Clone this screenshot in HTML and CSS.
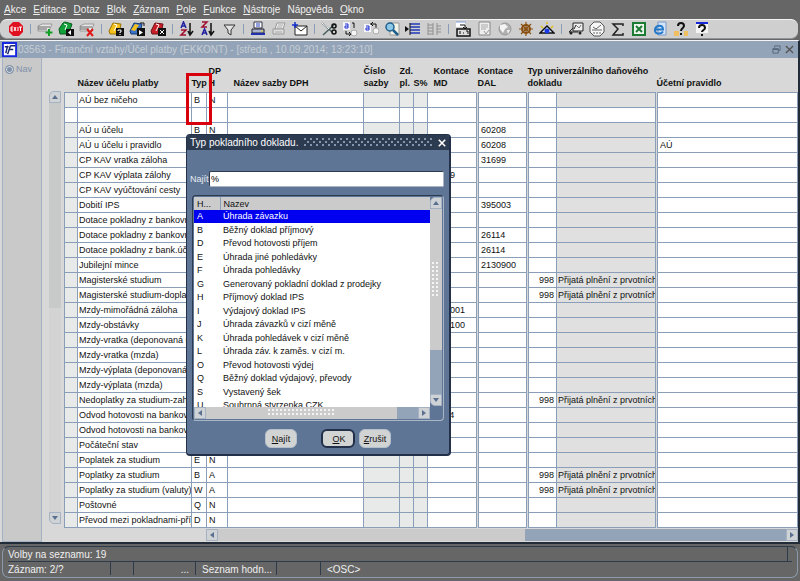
FILE: index.html
```html
<!DOCTYPE html>
<html lang="cs">
<head>
<meta charset="UTF-8" />
<meta name="viewport" content="width=device-width, initial-scale=1" />
<title>Finanční vztahy/Účel platby</title>
<link rel="stylesheet" href="styles.css">
</head>
<body>

<nav class="menubar">
  <a href="#"><u>A</u>kce</a>
  <a href="#"><u>E</u>ditace</a>
  <a href="#"><u>D</u>otaz</a>
  <a href="#"><u>B</u>lok</a>
  <a href="#"><u>Z</u>áznam</a>
  <a href="#"><u>P</u>ole</a>
  <a href="#"><u>F</u>unkce</a>
  <a href="#"><u>N</u>ástroje</a>
  <a href="#">Náp<u>o</u>věda</a>
  <a href="#"><u>O</u>kno</a>
</nav>

<div class="toolbar">
  <button type="button" aria-label="Exit"><svg viewBox="0 0 16 16"><path d="M5 1h6l4 4v6l-4 4H5l-4-4V5z" fill="#e01020"/><path d="M3 6h2M3 8h2M3 10h2M3 6v4M6 6l2 4M8 6l-2 4M10 6v4M11 6h3M12.5 6v4" stroke="#fff" fill="none"/></svg></button>
  <i class="sep"></i>
  <button type="button" aria-label="Vložit záznam"><svg viewBox="0 0 16 16"><path d="M1 5l4-2h10l-3 7H1z" fill="#e8e8e8" stroke="#999"/><path d="M1 6h12M1 8h9" stroke="#666"/><path d="M12 8v7M8.500 11.500h7" stroke="#12a024" stroke-width="2"/></svg></button>
  <button type="button" aria-label="Uložit"><svg viewBox="0 0 16 16"><path d="M1 8l4-6 2-1 7 2-1 3-3 7H2z" fill="#14a038" stroke="#075c1c"/><path d="M6 3l3 1-2 5" stroke="#fff" fill="none"/><rect x="8" y="8" width="8" height="7" fill="#111"/><path d="M13 9v5l-3-2.500z" fill="#fff"/></svg></button>
  <button type="button" aria-label="Smazat záznam"><svg viewBox="0 0 16 16"><path d="M1 5l4-2h10l-3 7H1z" fill="#e8e8e8" stroke="#999"/><path d="M1 6h12M1 8h9" stroke="#666"/><path d="M8 8l6 7M14 8l-6 7" stroke="#e01818" stroke-width="2"/></svg></button>
  <i class="sep"></i>
  <button type="button" aria-label="Zadat dotaz"><svg viewBox="0 0 16 16"><path d="M1 10l4-8 8 1-2 10H2z" fill="#f4c01c" stroke="#9a7400"/><path d="M6 3l3 1-3 6" stroke="#fff" fill="none"/><rect x="8" y="7" width="8" height="8" fill="#111"/><path d="M10 10V9h3v2h-1v1M12 13v1" stroke="#fff" fill="none"/></svg></button>
  <button type="button" aria-label="Provést dotaz"><svg viewBox="0 0 16 16"><path d="M1 10l4-8 8 1-2 10H2z" fill="#3a74c8" stroke="#173a78"/><path d="M2 9l4-6 4 1-4 6z" fill="#f4c01c"/><path d="M11 2h4v3" stroke="#111" fill="none"/><rect x="8" y="7" width="8" height="8" fill="#111"/><path d="M10 9v5l4-2.500z" fill="#fff"/></svg></button>
  <button type="button" aria-label="Zrušit dotaz"><svg viewBox="0 0 16 16"><path d="M1 10l4-8 8 1-2 10H2z" fill="#c82028" stroke="#701014"/><path d="M6 3l3 1-3 6" stroke="#fff" fill="none"/><rect x="8" y="7" width="8" height="8" fill="#111"/><path d="M10 9l4 4M14 9l-4 4" stroke="#fff" fill="none"/></svg></button>
  <i class="sep"></i>
  <button type="button" aria-label="Řadit vzestupně"><svg viewBox="0 0 16 16"><path d="M2 7l2.500-6L7 7M3 5h3" stroke="#2020a0" stroke-width="1.500" fill="none"/><path d="M2 9h5l-5 5h5" stroke="#a01030" stroke-width="1.500" fill="none"/><path d="M11 2v11M9 10l2 4 3-4" stroke="#111" stroke-width="1.500" fill="none"/></svg></button>
  <button type="button" aria-label="Řadit sestupně"><svg viewBox="0 0 16 16"><path d="M2 1h5L2 6h5" stroke="#a01030" stroke-width="1.500" fill="none"/><path d="M2 14l2.500-6L7 14M3 12h3" stroke="#2020a0" stroke-width="1.500" fill="none"/><path d="M11 2v11M9 10l2 4 3-4" stroke="#111" stroke-width="1.500" fill="none"/></svg></button>
  <button type="button" aria-label="Filtr"><svg viewBox="0 0 16 16"><path d="M3 4h11l-4 5v5l-3-2V9z" fill="#e4e4e4" stroke="#333"/></svg></button>
  <i class="sep"></i>
  <button type="button" aria-label="Tisk"><svg viewBox="0 0 16 16"><path d="M4 1h8v6H4z" fill="#fff" stroke="#334"/><path d="M6 3h4M6 5h4" stroke="#2040c0"/><path d="M2 8h12v4H2z" fill="#aab4d0" stroke="#223"/><path d="M1 13h14" stroke="#2030b0" stroke-width="2"/><path d="M11 10h2" stroke="#e8d820"/></svg></button>
  <button type="button" aria-label="Tisk obrazovky" disabled><svg viewBox="0 0 16 16"><path d="M6 2h8l-2 6H4z" fill="#eee" stroke="#999"/><path d="M2 8h11v5H2z" fill="#ddd" stroke="#999"/><path d="M7 4h5M6 6h5M4 11h7" stroke="#aaa"/></svg></button>
  <button type="button" aria-label="Odeslat"><svg viewBox="0 0 16 16"><path d="M3 5h12v9H3z" fill="#fff" stroke="#222"/><path d="M3 5l6 5 6-5" stroke="#222" fill="none"/><path d="M3 1v6M0 4h6" stroke="#1030d0" stroke-width="1.500"/></svg></button>
  <i class="sep"></i>
  <button type="button" aria-label="Vyjmout"><svg viewBox="0 0 16 16"><path d="M1 2l10 9M2 14L14 3" stroke="#4a6060" stroke-width="1.500"/><path d="M1 2l7 6" stroke="#fff"/><circle cx="13" cy="5" r="2" fill="none" stroke="#111" stroke-width="1.500"/><circle cx="13" cy="11" r="2" fill="none" stroke="#111" stroke-width="1.500"/></svg></button>
  <button type="button" aria-label="Kopírovat"><svg viewBox="0 0 16 16"><path d="M1 1h7v8H1z" fill="#f4f4ff"/><path d="M3 3h3v4H3V5h3" stroke="#2030d0" fill="none"/><path d="M10 2h2v5M4 10v3h4M7 11l2 2-2 2" stroke="#111" fill="none"/><circle cx="12" cy="12" r="3" fill="#f4f4f4" stroke="#aaa"/></svg></button>
  <button type="button" aria-label="Vložit"><svg viewBox="0 0 16 16"><path d="M1 3h7v8H1z" fill="#f4f4ff"/><path d="M3 5h3v4H3V7h3" stroke="#2030d0" fill="none"/><path d="M7 3h6v4M10 1L8 3l2 2" stroke="#111" fill="none"/><circle cx="13" cy="10" r="3" fill="#f4f4f4" stroke="#aaa"/></svg></button>
  <button type="button" aria-label="Hledat"><svg viewBox="0 0 16 16"><path d="M6 2h9v12H6z" fill="#f4f4e8" stroke="#999"/><circle cx="6" cy="6" r="4" fill="#8cc8e8" stroke="#20608c" stroke-width="1.500"/><path d="M9 9l5 5" stroke="#20608c" stroke-width="2.500"/></svg></button>
  <button type="button" aria-label="Seznam hodnot"><svg viewBox="0 0 16 16"><path d="M0 5l4 3-4 3z" fill="#111"/><path d="M5 3h10M5 6h10M5 9h10M5 12h10" stroke="#2038b8" stroke-width="1.500"/><path d="M5 2v12" stroke="#111"/></svg></button>
  <button type="button" aria-label="Detail" disabled><svg viewBox="0 0 16 16"><path d="M2 2v12M7 2v12M11 2v12M2 4h5M2 7h5M2 10h5M2 13h5M11 5h4M11 8h4M11 11h4" stroke="#909090" fill="none"/></svg></button>
  <i class="sep"></i>
  <button type="button" aria-label="Kalendář"><svg viewBox="0 0 16 16"><path d="M1 1h9v5H1z" fill="#fff"/><path d="M1 1h10" stroke="#80a0e0"/><path d="M5 4h5v4M8 6l2 2 2-2" stroke="#111" fill="none"/><path d="M2 8h13v7H2z" fill="#ddd" stroke="#111" stroke-width="1.500"/><path d="M5 10v3M8 12h1M11 10h2v3" stroke="#111" fill="none"/></svg></button>
  <button type="button" aria-label="Poznámka" disabled><svg viewBox="0 0 16 16"><path d="M3 1h11v13H3z" fill="#eee" stroke="#888"/><path d="M5 4h7M5 6h7M5 8h5" stroke="#aaa"/><path d="M8 10l2 3 3-4" stroke="#999" fill="none"/></svg></button>
  <button type="button" aria-label="Web" disabled><svg viewBox="0 0 16 16"><circle cx="8" cy="8" r="6" fill="#b0b0b0" stroke="#999"/><path d="M3 4l5-1 3 3-3 2-2 4-3-4zM10 9l3 0-2 4z" fill="#f4f4f4"/></svg></button>
  <button type="button" aria-label="Nastavení"><svg viewBox="0 0 16 16"><circle cx="8" cy="8" r="4" fill="none" stroke="#8a5010" stroke-width="2"/><path d="M8 1v14M1 8h14M3 3l10 10M13 3L3 13" stroke="#8a5010" stroke-width="1.200"/></svg></button>
  <button type="button" aria-label="Náhled"><svg viewBox="0 0 16 16"><path d="M1 12l7-7 7 7z" fill="#dce8ff" stroke="#111" stroke-width="1.500"/><circle cx="8" cy="10" r="2.500" fill="#1838e0"/><path d="M2 5l2 2M8 1v2M14 5l-2 2" stroke="#e0c010" stroke-width="1.500"/></svg></button>
  <i class="sep"></i>
  <button type="button" aria-label="Doprava"><svg viewBox="0 0 16 16"><path d="M5 2h10v8H5z" fill="#f0f0f0" stroke="#222"/><path d="M5 7L1 11h9M8 4l-2 4" stroke="#222" fill="none"/><circle cx="3" cy="12" r="1.500" fill="#222"/><circle cx="12" cy="12" r="1.500" fill="#222"/><path d="M8 4l3 3 2-3" stroke="#777" fill="none"/></svg></button>
  <button type="button" aria-label="Hodiny"><svg viewBox="0 0 16 16"><path d="M5 1h6l4 4v6l-4 4H5l-4-4V5z" fill="#f6f6f6" stroke="#555"/><path d="M4 6l3 2 5-4M3 9h10M5 11v2M8 11v2M11 11v2" stroke="#666" fill="none"/></svg></button>
  <button type="button" aria-label="Součet"><svg viewBox="0 0 16 16"><path d="M13 5V3H3l5 5-5 6h10v-2" stroke="#222" stroke-width="1.500" fill="none"/></svg></button>
  <button type="button" aria-label="Excel"><svg viewBox="0 0 16 16"><path d="M2 2h12v12H2z" fill="#eef6ee" stroke="#1c7c34" stroke-width="2"/><path d="M5 5l6 6M11 5l-6 6" stroke="#1c7c34" stroke-width="2"/></svg></button>
  <button type="button" aria-label="Internet"><svg viewBox="0 0 16 16"><path d="M6 1h8v13H6z" fill="#d4e4f8" stroke="#7898c8"/><path d="M3 8.500h8c0-5-7-5-8 0s6 5 8 2" stroke="#2478c8" stroke-width="2" fill="none"/></svg></button>
  <button type="button" aria-label="Nápověda k poli"><svg viewBox="0 0 16 16"><path d="M1 10h5v5H1zM11 10h4v5h-4z" fill="#f0c060"/><path d="M5 5c0-4 6-4 6 0 0 2-3 2-3 5M8 12v2" stroke="#111" stroke-width="2" fill="none"/></svg></button>
  <button type="button" aria-label="Nápověda"><svg viewBox="0 0 16 16"><path d="M2 1h12v11H2z" fill="#f4f4f4"/><path d="M2 2h12" stroke="#1828d8" stroke-width="2"/><path d="M5 7c0-4 6-4 6 0 0 2-3 2-3 4M8 13v2" stroke="#111" stroke-width="2" fill="none"/></svg></button>
</div>

<div class="window">
  <div class="titlebar">
    <svg class="logo" viewBox="0 0 16 16"><path d="M1 1h14v14H1z" fill="#fff" stroke="#1828e0" stroke-width="2"/><path d="M3 5h4M6 4L4 12M9 4L6 13M9 4h5M8 8h4" stroke="#1a2470" stroke-width="1.500" fill="none"/></svg>
    <span class="title">03563 - Finanční vztahy/Účel platby (EKKONT) - [středa , 10.09.2014; 13:23:10]</span>
    <button type="button" class="win-btn" aria-label="Obnovit"><svg viewBox="0 0 10 10"><path d="M3 3V1h6v5H7M1 4h6v5H1zM1 5h6" fill="none" stroke="#53647a"/></svg></button>
    <button type="button" class="win-btn" aria-label="Zavřít okno"><svg viewBox="0 0 10 10"><path d="M1 1l8 8M9 1L1 9" stroke="#555" stroke-width="1.500"/></svg></button>
  </div>

  <div class="content">
    <div class="nav-panel">
      <label><input type="radio" name="nav" checked> Nav</label>
    </div>

    <div class="vscroll">
      <button type="button" class="arrow up" aria-label="Nahoru"></button>
      <div class="track"><div class="thumb"></div></div>
      <button type="button" class="arrow down" aria-label="Dolů"></button>
    </div>

    <div class="grid-area">
      <table class="grid">
        <colgroup>
          <col class="c-rec"><col class="c-name"><col class="c-typ"><col class="c-dph"><col class="c-rate">
          <col class="c-num"><col class="c-zd"><col class="c-s"><col class="c-md"><col class="c-dal">
          <col class="c-code"><col class="c-doc"><col class="c-rule">
        </colgroup>
        <thead>
          <tr>
            <th></th>
            <th>Název účelu platby</th>
            <th>Typ</th>
            <th class="dph">DP<br>H</th>
            <th class="indent">Název sazby DPH</th>
            <th>Číslo<br>sazby</th>
            <th>Zd.<br>pl.</th>
            <th>S%</th>
            <th class="indent">Kontace<br>MD</th>
            <th>Kontace<br>DAL</th>
            <th colspan="2">Typ univerzálního daňového<br>dokladu</th>
            <th>Účetní pravidlo</th>
          </tr>
        </thead>
        <tbody id="rows"></tbody>
      </table>
      <div class="hscroll">
        <button type="button" class="arrow left" aria-label="Vlevo"></button>
        <div class="track"><div class="thumb"></div></div>
        <button type="button" class="arrow right" aria-label="Vpravo"></button>
      </div>
    </div>
  </div>
</div>

<div class="statusbar">
  <div class="status-row"><span class="message">Volby na seznamu: 19</span></div>
  <div class="status-row">
    <span class="s-record">Záznam: 2/?</span>
    <span class="s-small"></span>
    <span class="s-dots">...</span>
    <span class="s-list">Seznam hodn...</span>
    <span class="s-empty"></span>
    <span class="s-osc">&lt;OSC&gt;</span>
  </div>
</div>

<!-- highlight around the Typ column -->
<div class="highlight"></div>

<div class="dialog" role="dialog" aria-label="Typ pokladního dokladu">
  <div class="dialog-title">
    <span>Typ pokladního dokladu.</span>
    <div class="grip"></div>
    <button type="button" aria-label="Zavřít"><svg viewBox="0 0 10 10"><path d="M1 1l8 8M9 1L1 9" stroke="#fff" stroke-width="2"/></svg></button>
  </div>
  <div class="find">
    <label for="find">Najít</label>
    <input type="text" id="find" value="%">
  </div>
  <div class="lov">
    <div class="lov-main">
      <div class="lov-view">
        <table>
          <thead><tr><th class="key">H...</th><th>Nazev</th></tr></thead>
          <tbody id="lov"></tbody>
        </table>
      </div>
      <div class="hscroll">
        <button type="button" class="arrow left" aria-label="Vlevo"></button>
        <div class="track"><div class="thumb"><i class="dots"></i></div></div>
        <button type="button" class="arrow right" aria-label="Vpravo"></button>
      </div>
    </div>
    <div class="vscroll">
      <button type="button" class="arrow up" aria-label="Nahoru"></button>
      <div class="track"><div class="thumb"><i class="dots"></i></div></div>
      <button type="button" class="arrow down" aria-label="Dolů"></button>
    </div>
  </div>
  <div class="dialog-buttons">
    <button type="button" class="find-btn"><u>N</u>ajít</button>
    <button type="button" class="default"><u>O</u>K</button>
    <button type="button"><u>Z</u>rušit</button>
  </div>
</div>

<script src="script.js"></script>
</body>
</html>
```
FILE: styles.css
```css
* {
  box-sizing: border-box;
}

body {
  margin: 0;
  height: 100vh;
  display: flex;
  flex-direction: column;
  position: relative;
  overflow: hidden;
  background: #666;
  font-family: "Liberation Sans", Arial, sans-serif;
  font-size: 10px;
  color: #111;
}

button {
  font: inherit;
  color: inherit;
  margin: 0;
  padding: 0;
  border: none;
  background: none;
}

/* Menu */
.menubar {
  display: flex;
  gap: 7px;
  height: 19px;
  padding: 0 4px;
  line-height: 20px;
}

.menubar a {
  color: #f0f0f0;
  text-decoration: none;
}

/* Toolbar */
.toolbar {
  display: flex;
  align-items: center;
  gap: 1px;
  height: 20px;
  margin-right: 2px;
  padding-left: 6px;
  background: #cfcfcf;
  border-top: 1px solid #f4f4f4;
  border-bottom: 1px solid #8f9499;
  border-radius: 7px;
}

.toolbar button {
  width: 20px;
  height: 16px;
}

.toolbar svg {
  display: block;
  width: 16px;
  height: 16px;
  margin: 0 auto;
}

.sep {
  width: 7px;
  height: 10px;
  border-left: 1px solid #8a9cb8;
  margin-left: 3px;
  margin-right: -3px;
}

/* Form window */
.window {
  flex: 1;
  display: flex;
  flex-direction: column;
  min-height: 0;
  margin-top: 1px;
  border-top: 1px solid #f4f4f4;
  border-right: 2px solid #222c38;
  border-bottom: 2px solid #222c38;
  background: #d7d8d7;
}

.titlebar {
  display: flex;
  align-items: center;
  height: 17px;
  padding: 0 2px;
  background: #94a4b8;
}

.logo {
  width: 15px;
  height: 15px;
}

.title {
  flex: 1;
  padding-left: 1px;
  color: #c6ced6;
  white-space: nowrap;
}

.win-btn {
  width: 13px;
  height: 10px;
}

.win-btn svg {
  display: block;
  width: 9px;
  height: 9px;
  margin: 0 auto;
}

.content {
  flex: 1;
  display: flex;
  min-height: 0;
  padding-left: 2px;
}

.nav-panel {
  width: 40px;
  padding: 6px 2px;
  background: #c9c9c9;
  border: 1px solid #a4b2c4;
  border-top: none;
  font-size: 9px;
  color: #7f90a8;
}

.nav-panel label {
  display: flex;
  align-items: center;
  gap: 2px;
}

.nav-panel input {
  appearance: none;
  width: 9px;
  height: 9px;
  margin: 0;
  border: 1px solid #7f90a8;
  border-radius: 50%;
  background: #7f90a8;
  box-shadow: inset 0 0 0 1px #dde2e8;
}

/* Scrollbars */
.vscroll {
  display: flex;
  flex-direction: column;
}

.hscroll {
  display: flex;
}

.track {
  flex: 1;
  background: #94a4b8;
}

.thumb {
  display: flex;
  align-items: center;
  justify-content: center;
  background: #cbcbcb;
}

.arrow {
  display: flex;
  align-items: center;
  justify-content: center;
  width: 12px;
  height: 12px;
  background: #d0d3d6;
  border: 1px solid #a4b2c4;
}

.arrow::before {
  content: '';
  border: 3px solid transparent;
}

.up::before {
  border-bottom: 4px solid #5a7090;
  border-top: none;
}

.down::before {
  border-top: 4px solid #5a7090;
  border-bottom: none;
}

.left::before {
  border-right: 4px solid #5a7090;
  border-left: none;
}

.right::before {
  border-left: 4px solid #5a7090;
  border-right: none;
}

.up {
  border-radius: 5px 0 0 0;
}

.down {
  border-radius: 0 0 0 5px;
}

.content > .vscroll {
  margin: 33px 3px 18px 7px;
}

.content > .vscroll .track {
  background: #d3d3d3;
}

.content > .vscroll .thumb {
  height: 50%;
  background: #c8c9c9;
}

.grid-area {
  flex: 1;
  min-width: 0;
}

.grid-area .hscroll {
  height: 12px;
  margin-left: 142px;
}

.grid-area .thumb {
  width: 54%;
  height: 100%;
}

/* Data grid */
.grid {
  width: 100%;
  margin-bottom: 1px;
  table-layout: fixed;
  border-collapse: collapse;
  font-size: 9px;
}

.c-rec { width: 13px; }
.c-name { width: 114px; }
.c-typ { width: 15px; }
.c-dph { width: 21px; }
.c-rate { width: 136px; }
.c-num { width: 36px; }
.c-zd { width: 14px; }
.c-s { width: 14px; }
.c-md { width: 50px; }
.c-dal { width: 50px; }
.c-code { width: 29px; }
.c-doc { width: 100px; }

.grid th {
  height: 34px;
  padding: 0 0 3px;
  font-weight: bold;
  line-height: 12px;
  text-align: left;
  vertical-align: bottom;
  white-space: nowrap;
}

.grid th.indent {
  padding-left: 6px;
}

.grid th.dph {
  padding-left: 2px;
}

.grid td {
  height: 15px;
  padding: 0 0 0 2px;
  background: #fff;
  border: 1px solid #8a9eb8;
  line-height: 14px;
  white-space: nowrap;
  overflow: hidden;
}

.grid td.name {
  padding-left: 1px;
}

.grid td.num {
  padding-right: 2px;
  text-align: right;
}

.grid td.gap {
  border-right: 3px double #8a9eb8;
}

.grid td.off {
  background: #e8e9e9;
}

.grid td.doc {
  padding-left: 1px;
  background: #e0e0e0;
}

.grid tr.current td {
  background: #fff;
}

/* Status bar */
.statusbar {
  margin: 2px 2px 3px;
  padding: 0 5px;
  border: 1px solid #8c9aab;
  border-top-color: #2e3b4b;
  border-radius: 7px;
  color: #f0f0f0;
}

.status-row {
  display: flex;
  height: 15px;
  line-height: 15px;
}

.status-row:first-child {
  border-bottom: 1px solid #2e3b4b;
}

.message {
  flex: 1;
  margin-right: 4px;
  border-right: 1px solid #2e3b4b;
}

.s-record,
.s-small,
.s-dots,
.s-list,
.s-empty {
  height: 13px;
  border-right: 1px solid #2e3b4b;
}

.s-record { width: 103px; }
.s-small { width: 23px; }
.s-dots {
  width: 62px;
  padding-right: 6px;
  text-align: right;
}
.s-list {
  width: 81px;
  padding-left: 6px;
}
.s-empty { width: 44px; }
.s-osc { padding-left: 6px; }

.highlight {
  position: absolute;
  left: 186px;
  top: 73px;
  width: 26px;
  height: 52px;
  border: 3px solid #d8000c;
}

/* List of values */
.dialog {
  position: absolute;
  left: 186px;
  top: 134px;
  width: 265px;
  background: #5f7595;
  border: 1px solid #22304a;
  border-right-width: 2px;
  border-bottom-width: 2px;
  border-radius: 4px;
  overflow: hidden;
}

.dialog-title {
  display: flex;
  align-items: center;
  gap: 6px;
  height: 15px;
  padding: 0 3px;
  background: #2d3b50;
  color: #fff;
}

.dialog-title svg {
  display: block;
  width: 8px;
  height: 8px;
}

.grip {
  flex: 1;
  height: 9px;
  background:
    radial-gradient(circle at 1px 1px, #8496ac 1px, transparent 1px) 0 0 / 6px 6px,
    radial-gradient(circle at 1px 1px, #8496ac 1px, transparent 1px) 3px 3px / 6px 6px;
}

.find {
  display: flex;
  align-items: center;
  margin: 21px 5px 8px 3px;
  font-size: 9px;
  color: #e8ecf2;
}

.find label {
  width: 19px;
  white-space: nowrap;
}

.find input {
  flex: 1;
  min-width: 0;
  height: 16px;
  padding: 0 1px;
  border: 1px solid #2d3b50;
  border-right-color: #aab6c6;
  border-bottom-color: #aab6c6;
  border-radius: 2px;
  background: #fff;
  font: inherit;
}

.lov {
  display: flex;
  height: 226px;
  margin: 0 5px;
  padding: 1px;
  border: 1px solid #2d3b50;
  border-right-color: #aab6c6;
  border-bottom-color: #aab6c6;
  border-radius: 4px;
}

.lov-main {
  flex: 1;
  display: flex;
  flex-direction: column;
  min-width: 0;
}

.lov-view {
  flex: 1;
  min-height: 0;
  background: #fff;
  overflow: hidden;
}

.lov table {
  width: 100%;
  border-collapse: collapse;
  font-size: 9px;
}

.lov th {
  height: 13px;
  padding: 0 3px;
  background: #cbcbcb;
  font-weight: normal;
  text-align: left;
}

.lov th.key {
  width: 26px;
  border-right: 1px solid #8a9eb8;
}

.lov td {
  height: 13px;
  padding: 0 3px;
  line-height: 13px;
  white-space: nowrap;
}

.lov tr:nth-child(even) td {
  height: 14px;
}

.lov tr.selected td {
  background: #0000f0;
  color: #fff;
}

.lov .hscroll .thumb {
  width: 90%;
  height: 100%;
}

.lov .vscroll .thumb {
  height: 76%;
}

.lov .vscroll {
  margin-bottom: 13px;
}

.dots {
  background: radial-gradient(circle at 1px 1px, #f4f4f4 1px, transparent 1px) 0 0 / 4px 4px;
}

.hscroll .dots {
  width: 66px;
  height: 8px;
}

.vscroll .dots {
  width: 8px;
  height: 34px;
}

.dialog-buttons {
  display: flex;
  justify-content: flex-end;
  gap: 4px;
  padding: 8px 58px 6px;
}

.dialog-buttons button {
  height: 19px;
  min-width: 32px;
  padding: 0 3px;
  background: #d2d3d3;
  border: 1px solid #b4bfcc;
  border-radius: 6px;
  font-size: 9px;
}

.dialog-buttons .find-btn {
  margin-right: 20px;
}

.dialog-buttons .default {
  min-width: 34px;
  border: 2px solid #22304a;
  padding-left: 5px;
}
```
FILE: script.js
```javascript
// name, typ, dph, md, dal, code, rule
const rows = [
  ['AÚ bez ničeho', 'B', 'N'],
  [],
  ['AÚ u účelu', 'B', 'N', '', '60208'],
  ['AÚ u účelu i pravidlo', '', '', '', '60208', '', 'AÚ'],
  ['CP KAV vratka záloha', '', '', '', '31699'],
  ['CP KAV výplata zálohy', '', '', '31699'],
  ['CP KAV vyúčtování cesty'],
  ['Dobití IPS', '', '', '', '395003'],
  ['Dotace pokladny z bankovn'],
  ['Dotace pokladny z bankovn', '', '', '', '26114'],
  ['Dotace pokladny z bank.účt', '', '', '', '26114'],
  ['Jubilejní mince', '', '', '', '2130900'],
  ['Magisterské studium', '', '', '', '', '998'],
  ['Magisterské studium-doplat', '', '', '', '', '998'],
  ['Mzdy-mimořádná záloha', '', '', '3359001'],
  ['Mzdy-obstávky', '', '', '3379100'],
  ['Mzdy-vratka (deponovaná m'],
  ['Mzdy-vratka (mzda)'],
  ['Mzdy-výplata (deponovaná'],
  ['Mzdy-výplata (mzda)'],
  ['Nedoplatky za studium-zahr', '', '', '', '', '998'],
  ['Odvod hotovosti na bankov', '', '', '26114'],
  ['Odvod hotovosti na bankov'],
  ['Počáteční stav'],
  ['Poplatek za studium', 'E', 'N'],
  ['Poplatky za studium', 'B', 'A', '', '', '998'],
  ['Poplatky za studium (valuty)', 'W', 'A', '', '', '998'],
  ['Poštovné', 'Q', 'N'],
  ['Převod mezi pokladnami-příje', 'D', 'N']
];

document.getElementById('rows').innerHTML = rows.map((row, i) => {
  const [name = '', typ = '', dph = '', md = '', dal = '', code = '', rule = ''] = row;
  return `<tr class="${i === 1 ? 'current' : ''}">
    <td class="off"></td><td class="name">${name}</td><td>${typ}</td><td>${dph}</td><td></td>
    <td class="off"></td><td class="off"></td><td class="off"></td>
    <td class="gap">${md}</td><td class="gap">${dal}</td><td class="num">${code}</td>
    <td class="doc gap">${code ? 'Přijatá plnění z prvotních' : ''}</td><td>${rule}</td>
  </tr>`;
}).join('');

const values = [
  ['A', 'Úhrada závazku'],
  ['B', 'Běžný doklad příjmový'],
  ['D', 'Převod hotovosti příjem'],
  ['E', 'Úhrada jiné pohledávky'],
  ['F', 'Úhrada pohledávky'],
  ['G', 'Generovaný pokladní doklad z prodejky'],
  ['H', 'Příjmový doklad IPS'],
  ['I', 'Výdajový doklad IPS'],
  ['J', 'Úhrada závazků v cizí měně'],
  ['K', 'Úhrada pohledávek v cizí měně'],
  ['L', 'Úhrada záv. k zaměs. v cizí m.'],
  ['O', 'Převod hotovosti výdej'],
  ['Q', 'Běžný doklad výdajový, převody'],
  ['S', 'Vystavený šek'],
  ['U', 'Souhrnná stvrzenka CZK']
];

document.getElementById('lov').innerHTML = values.map(([key, name], i) =>
  `<tr class="${i === 0 ? 'selected' : ''}"><td>${key}</td><td>${name}</td></tr>`
).join('');
```
